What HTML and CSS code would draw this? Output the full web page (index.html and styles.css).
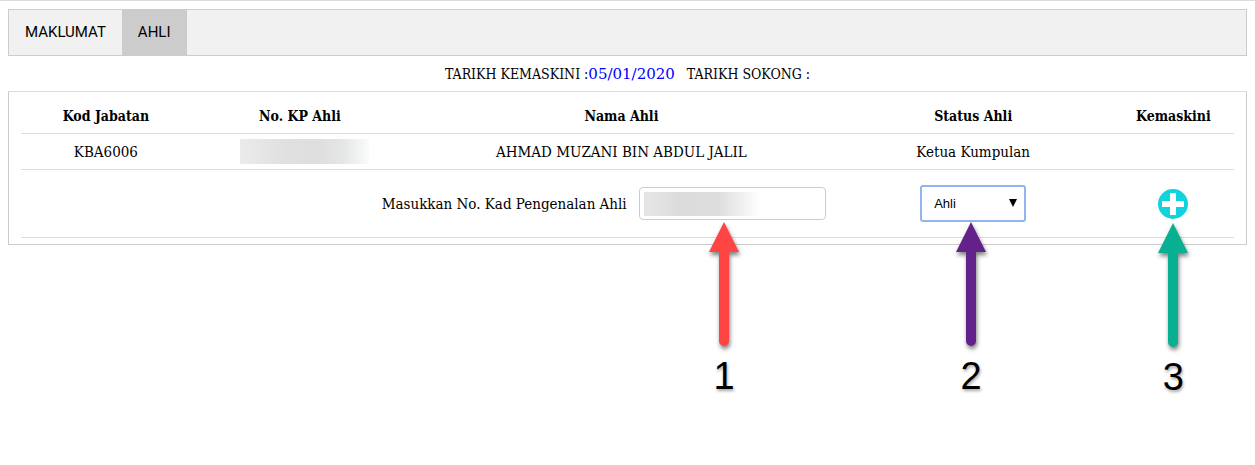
FILE: index.html
```
<!DOCTYPE html>
<html lang="ms">
<head>
<meta charset="utf-8">
<meta name="viewport" content="width=device-width, initial-scale=1">
<title>Ahli</title>
<link rel="stylesheet" href="styles.css">
</head>
<body>
<main class="page">
  <nav class="tabs">
    <button class="tab" type="button">MAKLUMAT</button>
    <button class="tab tab-active" type="button">AHLI</button>
  </nav>
  <p class="dates">
    <span>TARIKH KEMASKINI :<span class="date">05/01/2020</span></span>
    <span>TARIKH SOKONG :</span>
  </p>
  <section class="panel">
    <table class="members">
      <colgroup>
        <col class="col-dept"><col class="col-id"><col class="col-name"><col class="col-status"><col class="col-edit">
      </colgroup>
      <thead>
        <tr><th>Kod Jabatan</th><th>No. KP Ahli</th><th>Nama Ahli</th><th>Status Ahli</th><th>Kemaskini</th></tr>
      </thead>
      <tbody>
        <tr>
          <td>KBA6006</td>
          <td><span class="masked masked-cell"></span></td>
          <td>AHMAD MUZANI BIN ABDUL JALIL</td>
          <td>Ketua Kumpulan</td>
          <td></td>
        </tr>
        <tr class="entry">
          <td colspan="3">
            <div class="field">
              <label for="kp">Masukkan No. Kad Pengenalan Ahli</label>
              <div class="target">
                <input class="text-input" id="kp" type="text">
                <span class="masked masked-input"></span>
                <div class="callout callout-red">
                  <svg class="arrow" viewBox="0 0 30 124" aria-hidden="true"><path d="M15 0L30 30H20V119A5 5 0 0 1 10 119V30H0Z"/></svg>
                  <span>1</span>
                </div>
              </div>
            </div>
          </td>
          <td>
            <div class="target">
              <select class="select" aria-label="Status Ahli"><option>Ahli</option><option>Ketua Kumpulan</option></select>
              <svg class="caret" viewBox="0 0 8 8" aria-hidden="true"><path d="M0 0H8L4 8Z"/></svg>
              <div class="callout callout-purple">
                <svg class="arrow" viewBox="0 0 30 124" aria-hidden="true"><path d="M15 0L30 30H20V119A5 5 0 0 1 10 119V30H0Z"/></svg>
                <span>2</span>
              </div>
            </div>
          </td>
          <td>
            <div class="target">
              <button class="add" type="button" aria-label="Tambah">
                <svg viewBox="0 0 30 30" aria-hidden="true"><circle cx="15" cy="15" r="15" fill="#10d3dc"/><path d="M12 4H18V12H26V18H18V26H12V18H4V12H12Z" fill="#fff"/></svg>
              </button>
              <div class="callout callout-green">
                <svg class="arrow" viewBox="0 0 30 124" aria-hidden="true"><path d="M15 0L30 30H20V119A5 5 0 0 1 10 119V30H0Z"/></svg>
                <span>3</span>
              </div>
            </div>
          </td>
        </tr>
      </tbody>
    </table>
  </section>
</main>
</body>
</html>
```
FILE: styles.css
```
* { box-sizing: border-box; }
body {
  margin: 0;
  background: #fff;
  color: #000;
  font: 14px/20px "DejaVu Serif Condensed", "DejaVu Serif", serif;
}
.page {
  min-height: 100vh;
  border-top: 1px solid #dcdce0;
  padding: 8px;
}
.tabs {
  display: flex;
  background: #f1f1f1;
  border: 1px solid #ccc;
}
.tab {
  border: 0;
  padding: 14px 16px;
  background: transparent;
  color: #000;
  font: 15px/17px Roboto, sans-serif;
}
.tab-active { background: #ccc; }
.dates {
  display: flex;
  justify-content: center;
  gap: 12px;
  margin: 0;
  padding: 8px 0 7px;
}
.date {
  color: #00f;
  font-family: "DejaVu Serif", serif;
  font-size: 15px;
}
.panel {
  border: 1px solid #ccc;
  border-top-color: #ddd;
  padding: 6px 12px;
}
.members {
  width: 100%;
  table-layout: fixed;
  border-collapse: separate;
  border-spacing: 0;
}
.col-dept { width: 14%; }
.col-id { width: 18%; }
.col-name { width: 35%; }
.col-status { width: 23%; }
.col-edit { width: 10%; }
.members th,
.members td {
  height: 36px;
  padding: 0 8px;
  border-bottom: 1px solid #ddd;
  text-align: center;
  vertical-align: middle;
}
.members td { font-size: 15px; }
.members .entry td { height: 68px; }
.field {
  display: flex;
  align-items: center;
  justify-content: flex-end;
  gap: 12px;
}
.target {
  display: inline-block;
  position: relative;
  vertical-align: middle;
}
.text-input {
  display: block;
  width: 187px;
  height: 33px;
  border: 1px solid #ccc;
  border-radius: 4px;
  padding: 0 12px;
  font: 14px "Liberation Sans", Arial, sans-serif;
}
.masked { display: block; }
.masked-cell {
  width: 129px;
  height: 25px;
  margin: 0 auto;
  position: relative;
  left: 5px;
  background: linear-gradient(90deg, #ebebeb, #e0e0e0 35%, #dedede 60%, #e5e6e6 80%, #fafcfb);
}
.masked-input {
  position: absolute;
  top: 5px;
  left: 5px;
  width: 116px;
  height: 24px;
  background: linear-gradient(90deg, #e6e6e6, #dcdcdc 30%, #dedede 65%, #fff);
}
.select {
  appearance: none;
  display: block;
  width: 106px;
  height: 37px;
  border: 2px solid #92b5ef;
  border-radius: 3px;
  padding: 0 12px;
  background: #fff;
  color: #000;
  font: 13px "Liberation Sans", Arial, sans-serif;
}
.caret {
  position: absolute;
  top: 14px;
  right: 9px;
  width: 8px;
  height: 8px;
  pointer-events: none;
}
.add {
  display: block;
  border: 0;
  padding: 0;
  background: none;
}
.add svg {
  display: block;
  width: 30px;
  height: 30px;
}
.callout {
  position: absolute;
  top: 100%;
  left: 50%;
  z-index: 1;
  display: flex;
  flex-direction: column;
  align-items: center;
  gap: 8px;
  width: 30px;
  margin-left: -15px;
  color: #000;
  font: 38px/44px "Liberation Sans", Arial, sans-serif;
  text-shadow: 1px 2px 3px rgba(0, 0, 0, .35);
  pointer-events: none;
}
.arrow {
  display: block;
  width: 30px;
  height: 124px;
  overflow: visible;
  filter: drop-shadow(1px 3px 2px rgba(0, 0, 0, .5));
}
.callout-red { margin-top: 2px; margin-left: -23px; }
.callout-purple { margin-left: -17px; }
.callout-green { margin-top: 4px; }
.callout-red .arrow { fill: #ff4444; }
.callout-purple .arrow { fill: #63218a; }
.callout-green .arrow { fill: #08af91; }
```
